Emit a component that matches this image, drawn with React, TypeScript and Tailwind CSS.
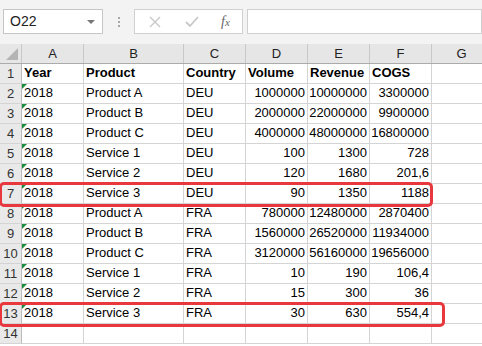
const cols = [
  { key: 'A', w: 'w-[62px]' },
  { key: 'B', w: 'w-[100px]' },
  { key: 'C', w: 'w-[62px]' },
  { key: 'D', w: 'w-[62px]' },
  { key: 'E', w: 'w-[62px]' },
  { key: 'F', w: 'w-[62px]' },
  { key: 'G', w: 'w-[60px]' },
];

const rows: string[][] = [
  ['Year', 'Product', 'Country', 'Volume', 'Revenue', 'COGS'],
  ['2018', 'Product A', 'DEU', '1000000', '10000000', '3300000'],
  ['2018', 'Product B', 'DEU', '2000000', '22000000', '9900000'],
  ['2018', 'Product C', 'DEU', '4000000', '48000000', '16800000'],
  ['2018', 'Service 1', 'DEU', '100', '1300', '728'],
  ['2018', 'Service 2', 'DEU', '120', '1680', '201,6'],
  ['2018', 'Service 3', 'DEU', '90', '1350', '1188'],
  ['2018', 'Product A', 'FRA', '780000', '12480000', '2870400'],
  ['2018', 'Product B', 'FRA', '1560000', '26520000', '11934000'],
  ['2018', 'Product C', 'FRA', '3120000', '56160000', '19656000'],
  ['2018', 'Service 1', 'FRA', '10', '190', '106,4'],
  ['2018', 'Service 2', 'FRA', '15', '300', '36'],
  ['2018', 'Service 3', 'FRA', '30', '630', '554,4'],
  ['', '', '', '', '', ''],
];

const Toolbar = () => (
  <div className="flex h-[44px] items-start bg-[#f3f3f3] pt-[9px]">
    <div className="ml-[3px] flex h-[25px] w-[100px] shrink-0 items-center justify-between border border-[#c6c6c6] bg-white pl-[6px] pr-[7px] text-[14px] text-[#222]">
      <span>O22</span>
      <span className="h-0 w-0 border-x-[4px] border-t-[4px] border-x-transparent border-t-[#777]" />
    </div>
    <div className="flex h-[25px] w-[31px] shrink-0 flex-col items-center justify-center gap-[2px]">
      <span className="h-[2px] w-[2px] bg-[#a8a8a8]" />
      <span className="h-[2px] w-[2px] bg-[#a8a8a8]" />
      <span className="h-[2px] w-[2px] bg-[#a8a8a8]" />
    </div>
    <div className="flex h-[25px] w-[109px] shrink-0 items-center border border-[#d0d0d0] bg-white">
      <svg className="ml-[14px]" width="12" height="12" viewBox="0 0 12 12">
        <path d="M1 1 L11 11 M11 1 L1 11" stroke="#c8c8c8" strokeWidth="1.4" fill="none" />
      </svg>
      <svg className="ml-[24px]" width="14" height="12" viewBox="0 0 14 12">
        <path d="M1 6 L5 10 L13 1" stroke="#c8c8c8" strokeWidth="1.8" fill="none" />
      </svg>
      <span className="ml-[22px] font-['Liberation_Serif',serif] text-[14px] italic text-[#666]">
        f<span className="text-[11px]">x</span>
      </span>
    </div>
    <div className="ml-[4px] h-[25px] flex-1 border border-[#d0d0d0] bg-white" />
  </div>
);

const Grid = () => (
  <div className="relative">
    <div className="flex h-[20px] border-b border-[#ababab] bg-[#e6e6e6] text-[13px] text-[#222]">
      <div className="relative w-[22px] shrink-0 border-r border-[#c8c8c8]">
        <span className="absolute bottom-[3px] right-[3px] h-0 w-0 border-b-[12px] border-l-[12px] border-b-[#b4b4b4] border-l-transparent" />
      </div>
      {cols.map((c) => (
        <div
          key={c.key}
          className={`${c.w} flex shrink-0 items-center justify-center border-r border-[#c8c8c8]`}
        >
          {c.key}
        </div>
      ))}
    </div>
    {rows.map((r, i) => (
      <div key={i} className="flex h-[20px] text-[13px] text-black">
        <div className="flex w-[22px] shrink-0 items-center justify-center border-b border-r border-b-[#d4d4d4] border-r-[#bdbdbd] bg-[#e9e9e9] text-[#333]">
          {i + 1}
        </div>
        {cols.map((c, j) => {
          const v = r[j] ?? '';
          const num = j >= 3 && i > 0;
          return (
            <div
              key={c.key}
              className={`${c.w} relative flex shrink-0 items-end overflow-hidden whitespace-nowrap border-b border-r border-[#d4d4d4] pb-[1px] ${
                num ? 'justify-end pr-[2px]' : 'pl-[2px]'
              } ${i === 0 ? 'font-bold' : ''}`}
            >
              {j === 0 && i > 0 && v && (
                <span className="absolute left-0 top-0 h-0 w-0 border-r-[5px] border-t-[5px] border-r-transparent border-t-[#1e8a3c]" />
              )}
              {v}
            </div>
          );
        })}
      </div>
    ))}
    <div className="pointer-events-none absolute left-[-1px] top-[138px] h-[25px] w-[434px] rounded-[5px] border-[3px] border-[#e8383d]" />
    <div className="pointer-events-none absolute left-[-1px] top-[258px] h-[25px] w-[446px] rounded-[5px] border-[3px] border-[#e8383d]" />
  </div>
);

const App = () => {
  return (
    <div className="h-[346px] w-[482px] overflow-hidden bg-white font-['Liberation_Sans',Arial,sans-serif]">
      <Toolbar />
      <Grid />
    </div>
  );
};

export default App;
